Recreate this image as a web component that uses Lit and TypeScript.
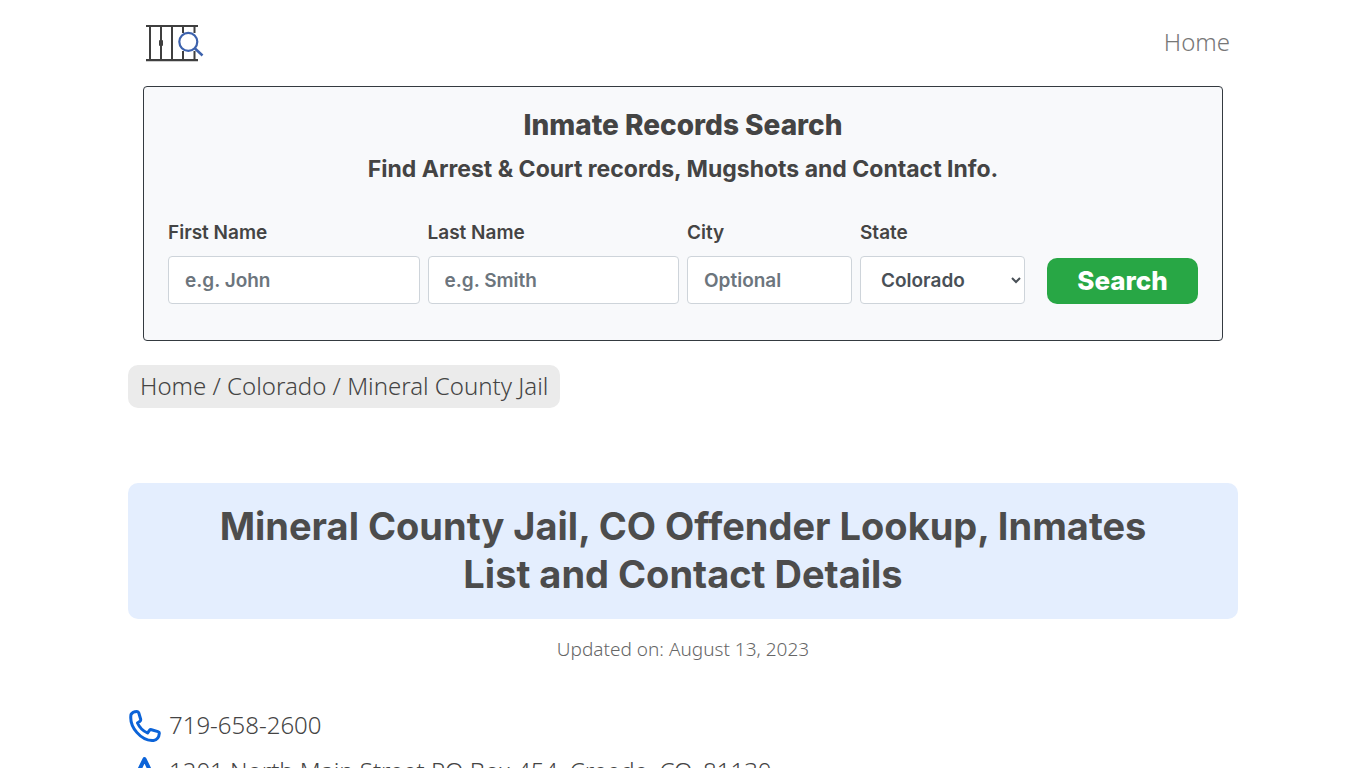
import { LitElement, html, css, svg } from "lit";
import { customElement } from "lit/decorators.js";

const logo = svg`
  <g fill="none" stroke="#3f3f3f" stroke-width="2">
    <path d="M3 3H55M3 37.200H55" stroke-width="2.200"/>
    <path d="M7 3V37M18 3V37M29 3V37M40 3V10M40 28V37M51.500 3V10M51.500 28V37"/>
  </g>
  <rect x="16" y="17" width="4" height="6" rx="1" fill="#3f3f3f"/>
  <g fill="none" stroke="#3d62ad" stroke-width="2.200">
    <circle cx="45.300" cy="18.800" r="9"/>
    <path d="M52 25.500L59.500 32.500" stroke-width="2.500"/>
  </g>`;

@customElement("app-root")
export class AppRoot extends LitElement {
  static styles = css`
    :host {
      display: block;
      height: 100vh;
      overflow: hidden;
      background: #fff;
      color: #444;
      font-family: "Noto Sans", sans-serif;
      font-size: 24px;
      font-weight: 300;
      line-height: 36px;
    }
    * { box-sizing: border-box; }
    a { color: inherit; text-decoration: none; }
    .container { max-width: 1110px; margin: 0 auto; }
    header {
      display: flex;
      align-items: center;
      justify-content: space-between;
      height: 86px;
      padding: 0 8px 0 15px;
    }
    header svg { display: block; }
    header nav { padding-bottom: 2px; color: #777; }
    .search {
      margin: 0 15px;
      padding: 18px 24px 36px;
      border: 1px solid #343a40;
      border-radius: 4px;
      background: #f8f9fb;
      font-family: Inter, sans-serif;
      text-align: center;
    }
    h2, h3, h1 { margin: 0; }
    h2 { font-size: 28px; font-weight: 800; line-height: 40px; }
    h3 { margin: 6px 0 32px; font-size: 23px; font-weight: 700; line-height: 36px; }
    form {
      display: grid;
      grid-template-columns: 3fr 3fr 2fr 2fr 2fr;
      align-items: end;
      margin: 0 -4px;
      text-align: left;
    }
    .field { display: grid; gap: 9px; padding: 0 4px; min-width: 0; }
    label { font-size: 19px; font-weight: 600; line-height: 28px; }
    input, select {
      width: 100%;
      height: 48px;
      padding: 0 16px;
      border: 1px solid #ced4da;
      border-radius: 4px;
      background: #fff;
      color: #495057;
      font: inherit;
      font-size: 19px;
      font-weight: 600;
    }
    select { padding: 0 0 0 16px; }
    input::placeholder { color: #6c757d; opacity: 1; }
    button {
      height: 46px;
      margin: 0 4px 0 18px;
      border: 0;
      border-radius: 10px;
      background: #28a745;
      color: #fff;
      font: inherit;
      font-size: 26px;
      font-weight: 800;
    }
    .crumbs {
      width: fit-content;
      margin-top: 24px;
      padding: 3px 12px 4px;
      border-radius: 10px;
      background: #ebebeb;
    }
    h1 {
      margin-top: 75px;
      padding: 19px 80px 21px;
      border-radius: 10px;
      background: #e4eefe;
      color: #4c4c4c;
      font-family: Inter, sans-serif;
      font-size: 38px;
      font-weight: 700;
      line-height: 48px;
      text-align: center;
    }
    .updated { margin: 12px 0 40px; color: #666; font-size: 19px; text-align: center; }
    .contact { display: flex; align-items: center; gap: 8px; margin-bottom: 10px; }
    .contact svg { flex: none; }
  `;

  render() {
    return html`
      <div class="container">
        <header>
          <a href="#" aria-label="Inmate search home"><svg width="62" height="40" viewBox="0 0 62 40">${logo}</svg></a>
          <nav><a href="#">Home</a></nav>
        </header>
        <section class="search">
          <h2>Inmate Records Search</h2>
          <h3>Find Arrest &amp; Court records, Mugshots and Contact Info.</h3>
          <form>
            <div class="field"><label for="first">First Name</label><input id="first" placeholder="e.g. John"></div>
            <div class="field"><label for="last">Last Name</label><input id="last" placeholder="e.g. Smith"></div>
            <div class="field"><label for="city">City</label><input id="city" placeholder="Optional"></div>
            <div class="field"><label for="state">State</label><select id="state"><option>Colorado</option></select></div>
            <button type="button">Search</button>
          </form>
        </section>
        <nav class="crumbs" aria-label="Breadcrumb"><a href="#">Home</a> / <a href="#">Colorado</a> / <a href="#">Mineral County Jail</a></nav>
        <h1>Mineral County Jail, CO Offender Lookup, Inmates List and Contact Details</h1>
        <div class="updated">Updated on: August 13, 2023</div>
        <div class="contact">
          <svg width="33" height="33" viewBox="0 0 33 33" fill="none" stroke="#0b63d8" stroke-width="3" stroke-linejoin="round">
            <path d="M3 5.500C4 3.500 6.500 2.500 9 2.500C10 2.500 10.500 3 10.800 4L12.600 10C12.900 11 12.600 11.700 12 12.200L9.500 14C11.500 18.500 15 22 19.500 24L21.500 21.300C22 20.700 22.700 20.500 23.500 20.700L30 22.600C31 22.900 31.400 23.500 31.300 24.400C31 28 29 31 25.500 31.500C13 32 1 18 3 5.500Z"/>
          </svg>
          <a href="#">719-658-2600</a>
        </div>
        <div class="contact">
          <svg width="33" height="33" viewBox="0 0 33 33" fill="none" stroke="#0b63d8" stroke-width="4" stroke-linejoin="round">
            <path d="M16.500 4L29 30L16.500 24L4 30Z"/>
          </svg>
          <span>1201 North Main Street PO Box 454, Creede, CO, 81130</span>
        </div>
      </div>`;
  }
}
